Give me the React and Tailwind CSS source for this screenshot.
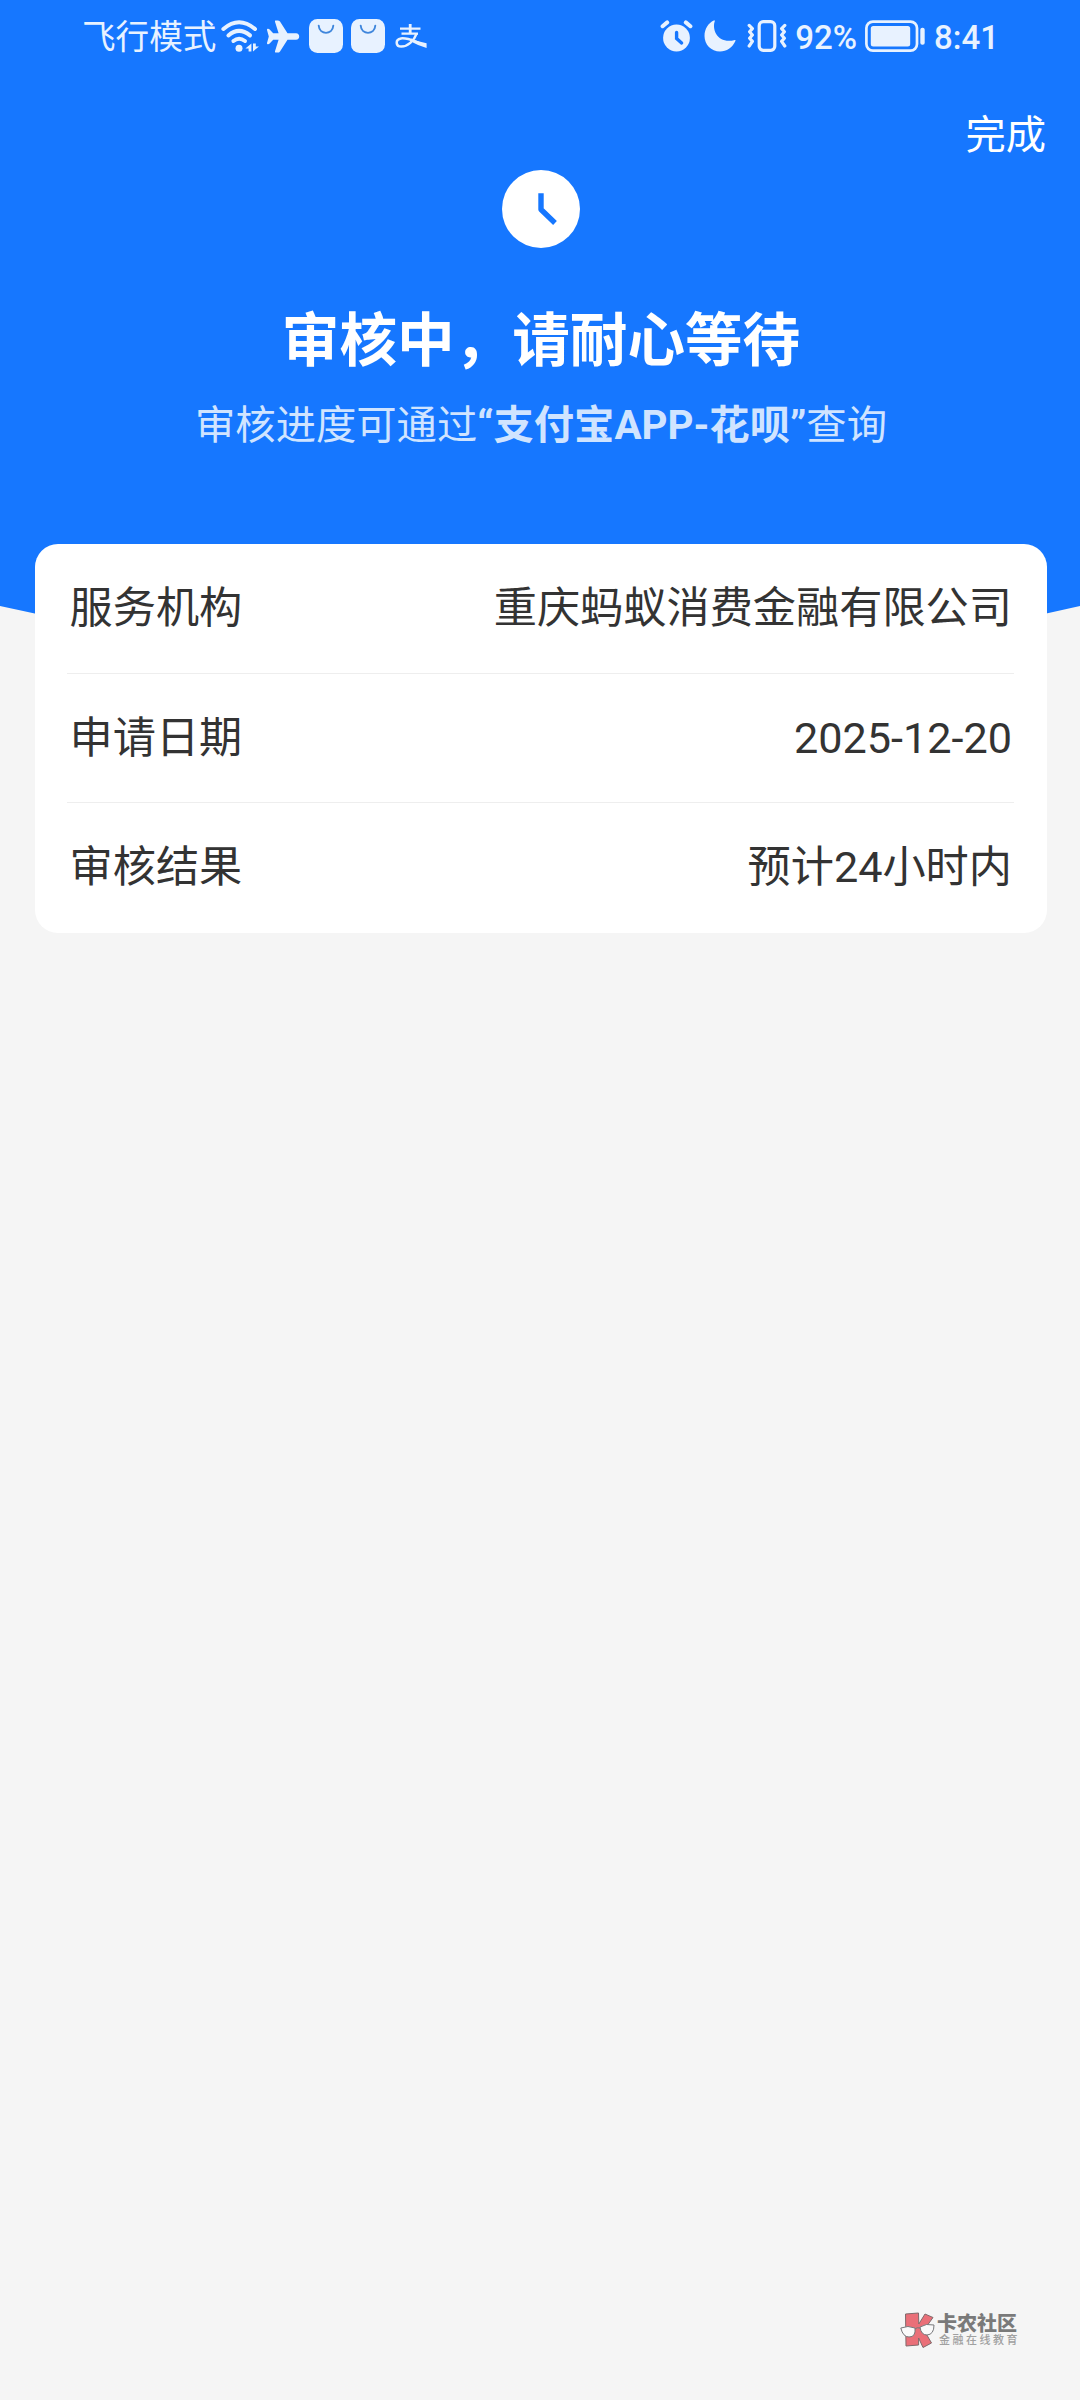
const AirplaneIcon = () => (
  <svg className="h-[33px] w-[34px]" viewBox="0 0 34 33" fill="currentColor">
    <path d="M21.5 13.2 L14 1.6 Q13.2 0.4 11.6 0.4 H9.6 Q8.6 0.4 9 1.8 L12.6 13.2 H7.2 L3.4 9.2 Q2.8 8.6 1.6 8.8 Q0.8 9 1 10 L2.8 16.5 L1 23 Q0.8 24 1.6 24.2 Q2.8 24.4 3.4 23.8 L7.2 19.8 H12.6 L9 31.2 Q8.6 32.6 9.6 32.6 H11.6 Q13.2 32.6 14 31.4 L21.5 19.8 H30 Q33.2 19.4 33.2 16.5 Q33.2 13.6 30 13.2 Z" />
  </svg>
);

const WifiIcon = () => (
  <svg className="h-8 w-[38px]" viewBox="0 0 38 32" fill="none" stroke="currentColor" strokeLinecap="round">
    <path d="M2.4 9 Q18 -4.4 34 9" strokeWidth="4" />
    <path d="M7.4 15.4 Q18 6.4 29 15.4" strokeWidth="4" />
    <path d="M12.4 21 Q18 16.6 24 21" strokeWidth="4" />
    <circle cx="18" cy="28.2" r="3.5" fill="currentColor" stroke="none" />
    <path d="M30.4 23.4 V31.4 H27.6 V28.4 H24.4 Z M32 31.4 V23.4 H34.8 V26.4 H38 Z" fill="currentColor" stroke="none" />
  </svg>
);

const BagIcon = () => (
  <svg className="h-[34px] w-[34px]" viewBox="0 0 34 34">
    <rect width="34" height="34" rx="8.5" fill="currentColor" />
    <path d="M9.7 6.7 C10.5 16.2 23.5 16.2 24.3 6.7" fill="none" stroke="#3f86dc" strokeWidth="1.9" strokeLinecap="round" />
  </svg>
);

const AlipayIcon = () => (
  <svg className="h-6 w-8" viewBox="0 0 32 24" fill="none" stroke="currentColor">
    <path d="M5 4.6 H25.5 M6.5 9.6 H23" strokeWidth="2.2" />
    <path d="M15.2 0 V10" strokeWidth="2.8" />
    <path d="M21.6 9.6 C19 17 12.5 22.6 6.4 22.6 C0.4 22.6 0 15.4 6 14.4 C12 13.6 18 16.6 24 18.8" strokeWidth="2.5" />
    <path d="M16 14.6 Q23 18.2 31.6 19.2 V24 Q24 22 15.4 17.2 Z" fill="currentColor" stroke="none" />
  </svg>
);

const AlarmIcon = () => (
  <svg className="h-8 w-[33px]" viewBox="0 0 33 32" fill="none" strokeLinecap="round">
    <circle cx="16.5" cy="18" r="13.4" fill="currentColor" />
    <path d="M2.6 6.2 L7.2 2.4 M30.4 6.2 L25.8 2.4" stroke="currentColor" strokeWidth="4" />
    <path d="M16.6 12.4 V18.6 L21.6 23" stroke="#1677ff" strokeWidth="3.4" />
  </svg>
);

const MoonIcon = () => (
  <svg className="h-8 w-8" viewBox="0 0 32 32" fill="currentColor">
    <path d="M11 0.5 C7 10.5 15 24.5 30.8 20 Q32 19.8 31.4 21 C28.5 27.5 22.5 31.5 16 31.5 C7 31.5 0.5 24.5 0.5 16 C0.5 9 4.5 3 9.8 0.6 Z" />
  </svg>
);

const VibrateIcon = () => (
  <svg className="h-8 w-10" viewBox="0 0 40 32" fill="none" stroke="currentColor" strokeLinecap="round" strokeLinejoin="round">
    <rect x="12.2" y="1.7" width="15.6" height="28.6" rx="4" strokeWidth="3.2" />
    <path d="M2.2 5.4 L5.4 8.6 L2.6 11.8 L5.4 15 L2.6 18.2 L5.4 21.4 L2.2 26" strokeWidth="3.2" />
    <path d="M37.8 5.4 L34.6 8.6 L37.4 11.8 L34.6 15 L37.4 18.2 L34.6 21.4 L37.8 26" strokeWidth="3.2" />
  </svg>
);

const BatteryIcon = () => (
  <svg className="h-8 w-[60px]" viewBox="0 0 60 32" fill="none">
    <rect x="1.4" y="1.6" width="50.6" height="29" rx="6.5" stroke="currentColor" strokeWidth="2.7" />
    <rect x="5.8" y="6" width="39.4" height="20.4" rx="2.5" fill="currentColor" />
    <rect x="55.3" y="7.8" width="4.4" height="17" rx="2" fill="currentColor" />
  </svg>
);

const StatusBar = () => (
  <div className="flex h-[72px] items-center pr-[81px] pl-[82px] text-[#e8f2ff]">
    <span className="pt-[3px] text-[33.6px] leading-none">飞行模式</span>
    <div className="ml-[5px] flex items-center">
      <WifiIcon />
      <div className="ml-[7px]"><AirplaneIcon /></div>
      <div className="ml-[9px]"><BagIcon /></div>
      <div className="ml-2"><BagIcon /></div>
      <div className="ml-[10px]"><AlipayIcon /></div>
    </div>
    <div className="ml-auto flex items-center">
      <AlarmIcon />
      <div className="ml-[11px]"><MoonIcon /></div>
      <div className="ml-[11px]"><VibrateIcon /></div>
      <span className="ml-2 pt-[2px] text-[33px] leading-none font-medium">92%</span>
      <div className="ml-2"><BatteryIcon /></div>
      <span className="ml-[9px] pt-[2px] text-[33px] leading-none font-medium">8:41</span>
    </div>
  </div>
);

const rows = [
  { label: '服务机构', value: '重庆蚂蚁消费金融有限公司' },
  { label: '申请日期', value: '2025-12-20' },
  { label: '审核结果', value: '预计24小时内' },
];

const Watermark = () => (
  <div className="flex items-center gap-[2px]">
    <svg className="h-[37px] w-[35px]" viewBox="0 0 35 37" strokeLinejoin="round">
      <g fill="#ea6f78" stroke="#806a6c" strokeWidth="1">
        <path d="M5.5 2 L18.5 1 L18.8 12 L25 2 L33 5.5 L24 18 L31.5 31 L23 35.5 L18.6 26 V33 L6 34 Z" />
      </g>
      <g fill="#fafafa" stroke="#77777a" strokeWidth="1">
        <path d="M0.8 16 Q8 13 15 16 Q16 25 9 25 Q3 25 0.8 16 Z" />
        <path d="M20 15 Q26 11 34 13 Q34 22.5 27 23 Q21 23 20 15 Z" />
        <path d="M15 17 Q17 15 20 16" fill="none" />
      </g>
    </svg>
    <div className="flex flex-col">
      <span className="text-[20px] leading-[20px] font-black text-[#7a7a7a]">卡农社区</span>
      <span className="pl-[2px] text-[11px] leading-[14px] font-medium tracking-[2.5px] text-[#a0a0a0]">金融在线教育</span>
    </div>
  </div>
);

export default function App() {
  return (
    <div className="flex h-[2400px] w-[1080px] flex-col overflow-hidden bg-[#f5f5f5] font-[Roboto,'Noto_Sans_CJK_SC',sans-serif]">
      {/* Header */}
      <header className="flex h-[606px] shrink-0 flex-col bg-[#1677ff]">
        <StatusBar />
        <div className="flex justify-end pt-[35px] pr-[34px]">
          <button className="text-[40.3px] leading-[58px] text-white">完成</button>
        </div>
        <div className="mt-[5px] flex flex-col items-center pl-[2px]">
          <svg className="h-[78px] w-[78px]" viewBox="0 0 78 78" fill="none">
            <circle cx="39" cy="39" r="39" fill="#fff" />
            <path d="M39 23.2 V39.5 L53 53" stroke="#1677ff" strokeWidth="5.4" strokeLinejoin="round" />
          </svg>
          <h1 className="mt-[54px] text-[57.6px] leading-[80px] font-bold text-white">审核中，请耐心等待</h1>
          <p className="mt-4 text-[40.32px] leading-[56px] text-[#d0e4ff]">
            审核进度可通过<b className="font-bold">“支付宝APP-花呗”</b>查询
          </p>
        </div>
      </header>
      <svg className="block h-[62px] w-full shrink-0" viewBox="0 0 1080 62" preserveAspectRatio="none">
        <path d="M0 -1 V0 Q540 124 1080 0 V-1 Z" fill="#1677ff" />
      </svg>

      {/* Detail card */}
      <section className="relative mr-[33px] -mt-[124px] ml-[34.5px] flex shrink-0 flex-col rounded-[23px] bg-white text-[#333]">
        {rows.map((row, i) => (
          <div key={row.label} className="pr-[33px] pl-8">
            <div className="flex h-[129.6px] items-center justify-between pr-[2px] pl-[3px] text-[43.2px] leading-none">
              <span>{row.label}</span>
              <span>{row.value}</span>
            </div>
            {i < rows.length - 1 && <div className="-mt-px h-px bg-[#eee]" />}
          </div>
        ))}
      </section>

      {/* Watermark */}
      <footer className="mt-auto flex justify-end pr-[60px] pb-[51px]">
        <Watermark />
      </footer>
    </div>
  );
}
